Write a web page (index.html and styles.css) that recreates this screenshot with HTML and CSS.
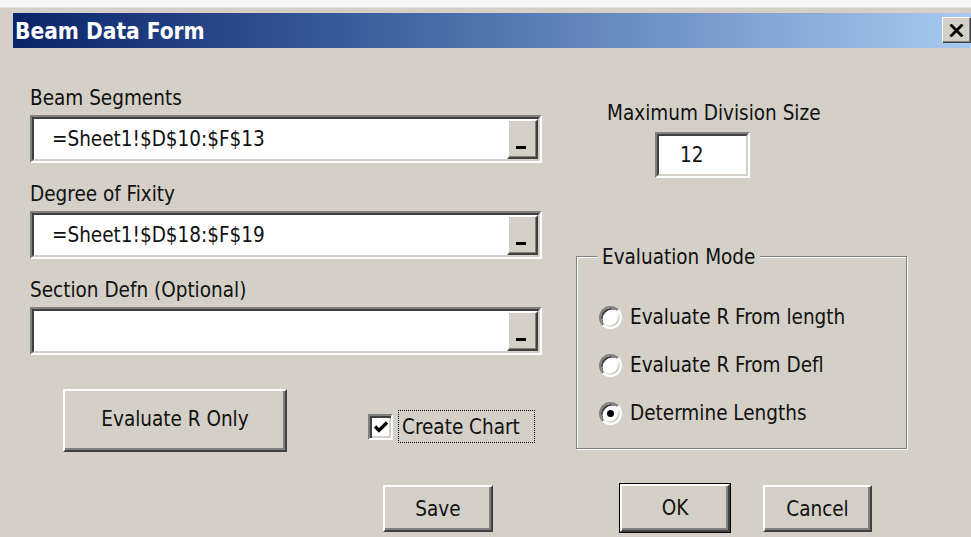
FILE: index.html
```html
<!DOCTYPE html>
<html lang="en">
<head>
<meta charset="utf-8">
<title>Beam Data Form</title>
<link rel="stylesheet" href="styles.css">
</head>
<body>
<div class="desk-strip"></div>
<div class="window">
  <div class="titlebar">
    <span class="title">Beam Data Form</span>
    <span class="close-btn">
      <svg width="15" height="13" viewBox="0 0 15 13"><path d="M1.5 0.5 L13.5 12.5 M13.5 0.5 L1.5 12.5" stroke="#000" stroke-width="2.8" fill="none"/></svg>
    </span>
  </div>

  <div class="content">
    <div class="cols">
      <div class="col-left">
        <div class="lbl">Beam Segments</div>
        <div class="refedit"><div class="refedit-inner"><span class="ref-val">=Sheet1!$D$10:$F$13</span><span class="ref-btn"><i class="dash"></i></span></div></div>

        <div class="lbl lbl-next">Degree of Fixity</div>
        <div class="refedit"><div class="refedit-inner"><span class="ref-val">=Sheet1!$D$18:$F$19</span><span class="ref-btn"><i class="dash"></i></span></div></div>

        <div class="lbl lbl-next">Section Defn (Optional)</div>
        <div class="refedit"><div class="refedit-inner"><span class="ref-val"></span><span class="ref-btn"><i class="dash"></i></span></div></div>

        <div class="action-row">
          <span class="btn btn-eval">Evaluate R Only</span>
          <span class="check-wrap">
            <span class="checkbox">
              <svg width="16" height="14" viewBox="0 0 16 14"><path d="M2 6.5 L6 10.5 L14 2.5" stroke="#000" stroke-width="3.2" fill="none"/></svg>
            </span>
            <span class="check-label">Create Chart</span>
          </span>
        </div>
      </div>

      <div class="col-right">
        <div class="lbl lbl-max">Maximum Division Size</div>
        <div class="numbox"><div class="numbox-inner">12</div></div>

        <div class="group">
          <span class="group-title">Evaluation Mode</span>
          <div class="radio-list">
            <div class="radio-row"><span class="radio"></span><span>Evaluate R From length</span></div>
            <div class="radio-row"><span class="radio"></span><span>Evaluate R From Defl</span></div>
            <div class="radio-row"><span class="radio radio-on"></span><span>Determine Lengths</span></div>
          </div>
        </div>
      </div>
    </div>

    <div class="footer">
      <span class="btn btn-save">Save</span>
      <span class="btn btn-ok">OK</span>
      <span class="btn btn-cancel">Cancel</span>
    </div>
  </div>
</div>
</body>
</html>
```

FILE: styles.css
```css
html, body {
  margin: 0;
  padding: 0;
}

body {
  width: 971px;
  height: 537px;
  overflow: hidden;
  background: #d4d0c8;
  font-family: "DejaVu Sans Condensed", "DejaVu Sans", sans-serif;
  font-size: 20.5px;
  color: #111;
}

.desk-strip {
  height: 7px;
  background: #f6f6f6;
  border-bottom: 1px solid #e4e2de;
}

.window {
  padding: 5px 0 0 13px;
}

/* caption bar */
.titlebar {
  height: 35px;
  display: flex;
  align-items: center;
  justify-content: space-between;
  background: linear-gradient(to right, #0a246a 0%, #3a5c9c 35%, #a6caf0 100%);
}

.title {
  padding-left: 2px;
  color: #fff;
  font-weight: bold;
  font-size: 22.5px;
  line-height: 35px;
  padding-top: 1px;
}

.close-btn {
  width: 29px;
  height: 26px;
  margin-top: -1px;
  box-sizing: border-box;
  display: flex;
  align-items: center;
  justify-content: center;
  background: #d4d0c8;
  border: 1px solid;
  border-color: #fff #404040 #404040 #fff;
  box-shadow: inset -1px -1px 0 #808080;
}

/* dialog body */
.cols {
  display: grid;
  grid-template-columns: 512px 332px;
  column-gap: 34px;
  padding-left: 17px;
}

.lbl {
  line-height: 22px;
  white-space: nowrap;
}

.col-left {
  padding-top: 39px;
}

.col-left .lbl {
  margin-bottom: 6px;
}

.lbl-next {
  margin-top: 20px;
}

/* sunken edit with range picker button */
.refedit {
  height: 48px;
  box-sizing: border-box;
  border: 2px solid;
  border-color: #808080 #fff #fff #808080;
}

.refedit-inner {
  height: 100%;
  box-sizing: border-box;
  border: 2px solid;
  border-color: #404040 #d4d0c8 #d4d0c8 #404040;
  background: #fff;
  display: flex;
  align-items: stretch;
}

.ref-val {
  flex: 1;
  padding-left: 18px;
  line-height: 40px;
}

.ref-btn {
  width: 31px;
  box-sizing: border-box;
  background: #d4d0c8;
  border: 2px solid;
  border-color: #fff #404040 #404040 #fff;
  box-shadow: inset -1px -1px 0 #808080;
  display: flex;
  align-items: flex-end;
  justify-content: center;
  padding: 0 3px 8px 0;
}

.dash {
  display: block;
  width: 10px;
  height: 3px;
  background: #000;
}

/* raised push buttons */
.btn {
  box-sizing: border-box;
  display: flex;
  align-items: center;
  justify-content: center;
  background: #d4d0c8;
  border: 2px solid;
  border-color: #fff #404040 #404040 #fff;
  box-shadow: inset -2px -2px 0 #808080;
  white-space: nowrap;
}

.action-row {
  display: flex;
  align-items: flex-start;
  margin-top: 34px;
}

.btn-eval {
  margin-left: 33px;
  width: 224px;
  height: 63px;
  padding-bottom: 4px;
}

.check-wrap {
  display: flex;
  align-items: center;
  gap: 5px;
  margin-left: 81px;
  margin-top: 21px;
}

.checkbox {
  width: 25px;
  height: 26px;
  box-sizing: border-box;
  border: 2px solid;
  border-color: #808080 #fff #fff #808080;
  background: #fff;
  box-shadow: inset 2px 2px 0 #404040, inset -2px -2px 0 #d4d0c8;
  display: flex;
  align-items: center;
  justify-content: center;
  padding: 1px 0 0 1px;
}

.check-label {
  border: 1px dotted #000;
  height: 33px;
  width: 137px;
  box-sizing: border-box;
  display: flex;
  align-items: center;
  padding-left: 3px;
  white-space: nowrap;
}

/* right column */
.col-right {
  padding-top: 54px;
}

.lbl-max {
  margin-left: 31px;
}

.numbox {
  margin: 8px 0 0 79px;
  width: 95px;
  height: 46px;
  box-sizing: border-box;
  border: 2px solid;
  border-color: #808080 #fff #fff #808080;
}

.numbox-inner {
  height: 100%;
  box-sizing: border-box;
  border: 2px solid;
  border-color: #404040 #d4d0c8 #d4d0c8 #404040;
  background: #fff;
  padding-left: 21px;
  line-height: 38px;
}

/* etched group box */
.group {
  margin-top: 78px;
  width: 331px;
  height: 193px;
  box-sizing: border-box;
  border: 1px solid #808080;
  box-shadow: 1px 1px 0 #fff, inset 1px 1px 0 #fff;
}

.group-title {
  display: inline-block;
  margin: -11px 0 0 20px;
  padding: 0 5px;
  line-height: 22px;
  background: #d4d0c8;
  vertical-align: top;
}

.radio-list {
  margin-top: 12px;
}

.radio-row {
  height: 48px;
  display: flex;
  align-items: center;
  gap: 8px;
  padding-left: 22px;
  white-space: nowrap;
}

.radio {
  width: 23px;
  height: 23px;
  box-sizing: border-box;
  border-radius: 50%;
  background: #fff;
  border: 2px solid;
  border-color: #808080 #fff #fff #808080;
  box-shadow: inset 2px 2px 0 -0.5px #404040, inset -2px -2px 0 -0.5px #d4d0c8;
  display: flex;
  align-items: center;
  justify-content: center;
}

.radio-on::after {
  content: "";
  width: 7px;
  height: 7px;
  border-radius: 50%;
  background: #000;
}

/* bottom command buttons */
.footer {
  display: flex;
  margin-top: 33px;
  padding-left: 370px;
}

.btn-save {
  width: 110px;
  height: 47px;
}

.btn-ok {
  margin-left: 127px;
  width: 110px;
  height: 48px;
  margin-top: -1px;
  outline: 1px solid #000;
  outline-offset: 0;
}

.btn-cancel {
  margin-left: 33px;
  width: 109px;
  height: 47px;
}
```
